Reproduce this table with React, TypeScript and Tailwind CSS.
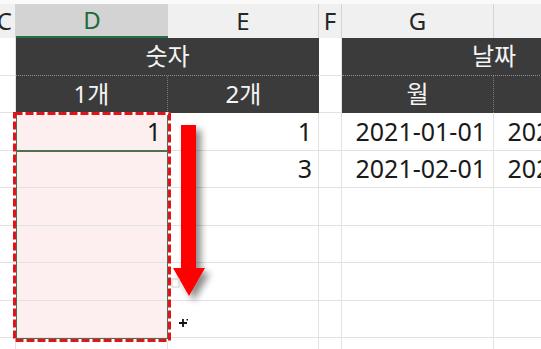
const font = "font-['Noto_Sans','Noto_Sans_CJK_KR',sans-serif]"

type CellProps = {
  w: string
  className?: string
  children?: React.ReactNode
}

function Cell({ w, className = "", children }: CellProps) {
  return (
    <div className={`${w} shrink-0 h-full flex items-center overflow-hidden whitespace-nowrap ${className}`}>
      {children}
    </div>
  )
}

const grid = "border-r border-b border-[#e2e2e2]"
const dark = "bg-[#3b3b3b] text-[#f4f4f4] justify-center"

function DataRow({ d, e, g, h, pink }: { d?: string; e?: string; g?: string; h?: string; pink?: boolean }) {
  return (
    <div className="flex h-[37.5px] shrink-0 text-[25px]">
      <Cell w="w-[16px]" className={grid} />
      <Cell w="w-[152px]" className={`${grid} justify-end pr-[6px] ${pink ? "bg-[#fdefef]" : ""}`}>{d}</Cell>
      <Cell w="w-[151px]" className={`${grid} justify-end pr-[6px]`}>{e}</Cell>
      <Cell w="w-[23px]" className={grid} />
      <Cell w="w-[152px]" className={`${grid} justify-end pr-[7px]`}>{g}</Cell>
      <Cell w="w-[152px]" className={`${grid} justify-end pr-[7px]`}>{h}</Cell>
    </div>
  )
}

export default function App() {
  return (
    <div className={`relative w-[541px] h-[349px] overflow-hidden bg-white text-[24px] text-[#1a1a1a] ${font}`}>
      <div className="flex flex-col w-[800px]">
        <div className="h-[4px] bg-[#fafafa]" />

        {/* column letters */}
        <div className="flex h-[34px] text-[#262626]">
          <Cell w="w-[16px]" className="bg-[#f0f0f0] justify-end pr-[3px] border-r border-[#d4d4d4]">C</Cell>
          <Cell w="w-[152px]" className="bg-[#d3d3d3] text-[#1e6b3e] justify-center border-b-2 border-[#217346]">D</Cell>
          <Cell w="w-[151px]" className="bg-[#f0f0f0] justify-center border-r border-[#d4d4d4]">E</Cell>
          <Cell w="w-[23px]" className="bg-[#f0f0f0] justify-center border-r border-[#d4d4d4]">F</Cell>
          <Cell w="w-[152px]" className="bg-[#f0f0f0] justify-center border-r border-[#d4d4d4]">G</Cell>
          <Cell w="w-[152px]" className="bg-[#f0f0f0] justify-center" />
        </div>

        {/* merged group headers */}
        <div className="flex h-[37.5px]">
          <Cell w="w-[16px]" className={grid} />
          <Cell w="w-[303px]" className={`${dark} border-b border-dotted border-[#8c8c8c]`}>숫자</Cell>
          <Cell w="w-[23px]" className={grid} />
          <Cell w="w-[304px]" className={`${dark} border-b border-dotted border-[#8c8c8c]`}>날짜</Cell>
        </div>

        <div className="flex h-[37.5px]">
          <Cell w="w-[16px]" className={grid} />
          <Cell w="w-[152px]" className={`${dark} border-r border-dotted border-[#7a7a7a]`}>1개</Cell>
          <Cell w="w-[151px]" className={dark}>2개</Cell>
          <Cell w="w-[23px]" className={grid} />
          <Cell w="w-[152px]" className={`${dark} border-r border-dotted border-[#7a7a7a]`}>월</Cell>
          <Cell w="w-[152px]" className={dark} />
        </div>

        <DataRow pink d="1" e="1" g="2021-01-01" h="2021-01-01" />
        <DataRow pink e="3" g="2021-02-01" h="2021-02-01" />
        <DataRow pink />
        <DataRow pink />
        <DataRow pink />
        <DataRow pink />
        <DataRow />
      </div>

      {/* selection outline and active cell */}
      <div className="absolute left-[15px] top-[112px] w-[154px] h-[228px] border-2 border-[#4f6f50]" />
      <div className="absolute left-[15px] top-[150px] w-[154px] h-[2px] bg-[#4f6f50]" />

      <svg className="absolute inset-0 pointer-events-none" width="541" height="349" viewBox="0 0 541 349">
        <defs>
          <filter id="arrowShadow" x="-50%" y="-20%" width="200%" height="150%">
            <feDropShadow dx="5" dy="5" stdDeviation="3.5" floodColor="#000" floodOpacity="0.45" />
          </filter>
        </defs>

        {/* dashed marquee */}
        <rect x="14.5" y="113.5" width="155" height="227" fill="none" stroke="#fff" strokeWidth="3" />
        <rect x="14.5" y="113.5" width="155" height="227" fill="none" stroke="#e0141b" strokeWidth="3" strokeDasharray="8 3" />

        {/* fill-down arrow */}
        <polygon
          points="181,125 196,125 196,268 205,268 189,296 173,268 181,268"
          fill="#ff0000"
          filter="url(#arrowShadow)"
        />

        {/* auto fill options hint */}
        <rect x="172" y="279" width="7" height="8" fill="none" stroke="#cfcfcf" strokeWidth="1" />

        {/* fill cursor */}
        <path d="M179 323h8M183 319v8" stroke="#111" strokeWidth="1.8" />
        <rect x="186.5" y="319" width="1.5" height="1.5" fill="#111" />
      </svg>
    </div>
  )
}
